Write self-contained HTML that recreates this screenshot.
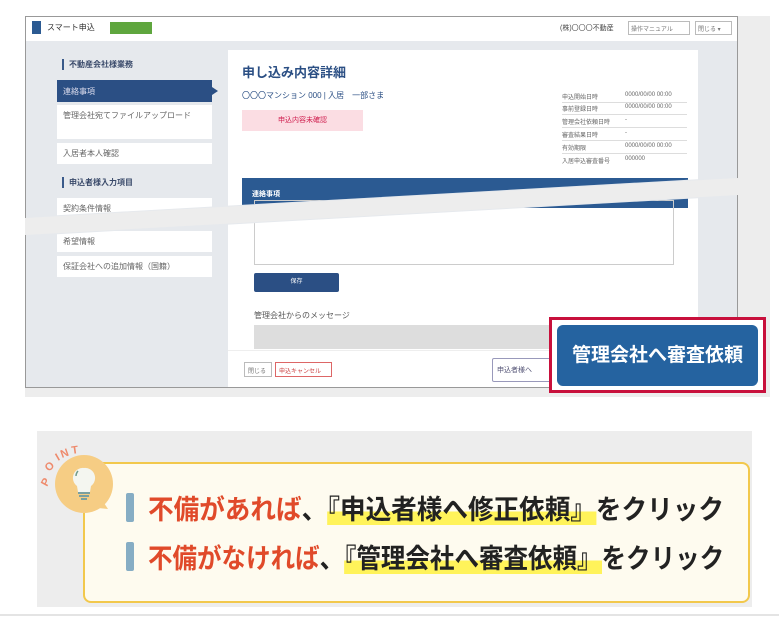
<!DOCTYPE html>
<html><head><meta charset="utf-8"><style>
*{margin:0;padding:0;box-sizing:border-box}
body{width:779px;height:618px;background:#fff;position:relative;overflow:hidden;font-family:"Liberation Sans","Noto Sans CJK JP",sans-serif}
.abs{position:absolute}
.sb{position:absolute;left:57px;width:155px;background:#fff;font-size:8px;color:#666;padding:0 6px;display:flex;align-items:center}
.sh{position:absolute;left:62px;font-size:8px;color:#3a4a6a;font-weight:bold;border-left:2px solid #3a5a8a;padding-left:5px}
.info{position:absolute;left:562px;font-size:6px;color:#666;width:125px;border-bottom:1px solid #ddd;height:11px;white-space:nowrap}
.info span{position:absolute;left:63px}
.pt{position:absolute;left:148px;font-size:27px;font-weight:bold;white-space:nowrap;color:#222;transform-origin:0 50%}
.r{color:#e04a2a}
.hl{background:linear-gradient(transparent 55%,#fff35a 55%)}
.bar{position:absolute;left:126px;width:8px;height:29px;background:#86adc4;border-radius:2px}
</style></head><body>
<div class="abs" style="left:25px;top:16px;width:745px;height:381px;background:#ededed"></div>
<div class="abs" style="left:25px;top:16px;width:713px;height:372px;clip-path:polygon(0 0,100% 0,100% 162px,0 202px)">
  <div class="abs" style="left:0;top:0;width:713px;height:372px;background:#e6e9ed;border:1px solid #999"></div>
</div>
<div class="abs" style="left:25px;top:16px;width:713px;height:372px;clip-path:polygon(0 219px,100% 179px,100% 100%,0 100%)">
  <div class="abs" style="left:0;top:0;width:713px;height:372px;background:#e6e9ed;border:1px solid #999"></div>
</div>
<div class="abs" style="left:0;top:0;width:779px;height:618px;clip-path:polygon(26px 17px,737px 17px,737px 177px,26px 217px,26px 236px,737px 196px,737px 387px,26px 387px)">
  <div class="abs" style="left:26px;top:17px;width:711px;height:24px;background:#fff"></div>
  <div class="abs" style="left:32px;top:21px;width:9px;height:13px;background:#2b5a92"></div>
  <div class="abs" style="left:47px;top:22px;font-size:8px;color:#333">スマート申込</div>
  <div class="abs" style="left:110px;top:22px;width:42px;height:12px;background:#5fa63e"></div>
  <div class="abs" style="left:560px;top:23px;font-size:7px;color:#444">(株)〇〇〇不動産</div>
  <div class="abs" style="left:628px;top:21px;width:62px;height:14px;border:1px solid #bbb;background:#fff;font-size:6px;color:#777;padding:2px">操作マニュアル</div>
  <div class="abs" style="left:695px;top:21px;width:37px;height:14px;border:1px solid #bbb;background:#fff;font-size:6px;color:#777;padding:2px">閉じる ▾</div>
  <div class="sh" style="top:59px">不動産会社様業務</div>
  <div class="sb" style="top:80px;height:22px;background:#2b4f84;color:#dde">連絡事項</div>
  <div class="abs" style="left:212px;top:87px;border-left:6px solid #2b4f84;border-top:4px solid transparent;border-bottom:4px solid transparent"></div>
  <div class="sb" style="top:105px;height:34px;align-items:flex-start;padding-top:5px;line-height:12px">管理会社宛てファイルアップロード</div>
  <div class="sb" style="top:143px;height:21px">入居者本人確認</div>
  <div class="sh" style="top:177px">申込者様入力項目</div>
  <div class="sb" style="top:198px;height:21px">契約条件情報</div>
  <div class="sb" style="top:231px;height:21px">希望情報</div>
  <div class="sb" style="top:256px;height:21px">保証会社への追加情報（国籍）</div>
  <div class="abs" style="left:228px;top:50px;width:470px;height:340px;background:#fff"></div>
  <div class="abs" style="left:242px;top:62px;font-size:13px;font-weight:bold;color:#2b4f84">申し込み内容詳細</div>
  <div class="abs" style="left:242px;top:90px;font-size:8px;color:#2b4f84">〇〇〇マンション 000 | 入居　一部さま</div>
  <div class="abs" style="left:242px;top:110px;width:121px;height:21px;background:#fbdde3;color:#d02050;font-size:7px;text-align:center;line-height:21px">申込内容未確認</div>
  <div class="info" style="top:92px">申込開始日時<span>0000/00/00 00:00</span></div>
  <div class="info" style="top:104px">事前登録日時<span>0000/00/00 00:00</span></div>
  <div class="info" style="top:117px">管理会社依頼日時<span>-</span></div>
  <div class="info" style="top:130px">審査結果日時<span>-</span></div>
  <div class="info" style="top:143px">有効期限<span>0000/00/00 00:00</span></div>
  <div class="info" style="top:156px;border:0">入居申込審査番号<span>000000</span></div>
  <div class="abs" style="left:242px;top:178px;width:446px;height:30px;background:#2b5a92"></div>
  <div class="abs" style="left:252px;top:189px;font-size:7px;color:#fff;font-weight:bold">連絡事項</div>
  <div class="abs" style="left:254px;top:200px;width:420px;height:65px;border:1px solid #ccc"></div>
  <div class="abs" style="left:254px;top:273px;width:85px;height:19px;background:#2b4f84;border-radius:2px;color:#fff;font-size:6px;text-align:center;line-height:19px">保存</div>
  <div class="abs" style="left:254px;top:310px;font-size:8px;color:#555">管理会社からのメッセージ</div>
  <div class="abs" style="left:254px;top:325px;width:300px;height:24px;background:#ddd"></div>
  <div class="abs" style="left:228px;top:350px;width:470px;height:1px;background:#eee"></div>
  <div class="abs" style="left:244px;top:362px;width:28px;height:15px;border:1px solid #bbb;font-size:6px;color:#777;padding:3px">閉じる</div>
  <div class="abs" style="left:275px;top:362px;width:57px;height:15px;border:1px solid #d66;font-size:6px;color:#c44;padding:3px">申込キャンセル</div>
  <div class="abs" style="left:492px;top:358px;width:60px;height:24px;border:1px solid #99b;font-size:7px;color:#557;padding:6px 4px;border-radius:2px">申込者様へ</div>
</div>
<div class="abs" style="left:549px;top:317px;width:217px;height:76px;border:3px solid #c8103c;background:#fff"></div>
<div class="abs" style="left:557px;top:325px;width:201px;height:61px;background:#2563a0;border-radius:6px;color:#fff;font-size:19px;text-align:center;line-height:61px;font-weight:bold">管理会社へ審査依頼</div>
<div class="abs" style="left:37px;top:431px;width:715px;height:176px;background:#ededed"></div>
<div class="abs" style="left:83px;top:462px;width:667px;height:141px;background:#fefbef;border:2px solid #f2c84c;border-radius:8px"></div>
<svg class="abs" style="left:36px;top:430px" width="90" height="95">
  <circle cx="48" cy="54" r="29" fill="#f6cd84"/>
  <path d="M62 78 L72 79 L66 70 Z" fill="#f6cd84"/>
  <path d="M48 38 a10 10 0 0 1 7 18 l-1 6 h-12 l-1-6 a10 10 0 0 1 7-18z" fill="#f4f6f0"/>
  <path d="M42 41 a8 8 0 0 0-2 5" stroke="#6f9a8a" stroke-width="1.5" fill="none"/>
  <rect x="42" y="62" width="12" height="2" fill="#7aa0a0"/><rect x="43" y="65" width="10" height="2" fill="#7aa0a0"/><rect x="45" y="68" width="6" height="2" fill="#7aa0a0"/>
  <text font-size="11" font-weight="bold" fill="#ee8a6c" font-family="Liberation Sans" transform="translate(11,57) rotate(-62)">P</text>
  <text font-size="11" font-weight="bold" fill="#ee8a6c" font-family="Liberation Sans" transform="translate(13,42) rotate(-45)">O</text>
  <text font-size="11" font-weight="bold" fill="#ee8a6c" font-family="Liberation Sans" transform="translate(22,31) rotate(-30)">I</text>
  <text font-size="11" font-weight="bold" fill="#ee8a6c" font-family="Liberation Sans" transform="translate(26,28) rotate(-20)">N</text>
  <text font-size="11" font-weight="bold" fill="#ee8a6c" font-family="Liberation Sans" transform="translate(36,24) rotate(-8)">T</text>
</svg>
<div class="bar" style="top:493px"></div>
<div class="bar" style="top:542px"></div>
<div class="pt" style="top:488px;transform:scaleX(0.948)"><span class="r">不備があれば</span>、<span class="hl">『申込者様へ修正依頼』</span>をクリック</div>
<div class="pt" style="top:537px;transform:scaleX(0.908)"><span class="r">不備がなければ</span>、<span class="hl">『管理会社へ審査依頼』</span>をクリック</div>
<div class="abs" style="left:0;top:614px;width:779px;height:2px;background:#e4e4e4"></div>
</body></html>
